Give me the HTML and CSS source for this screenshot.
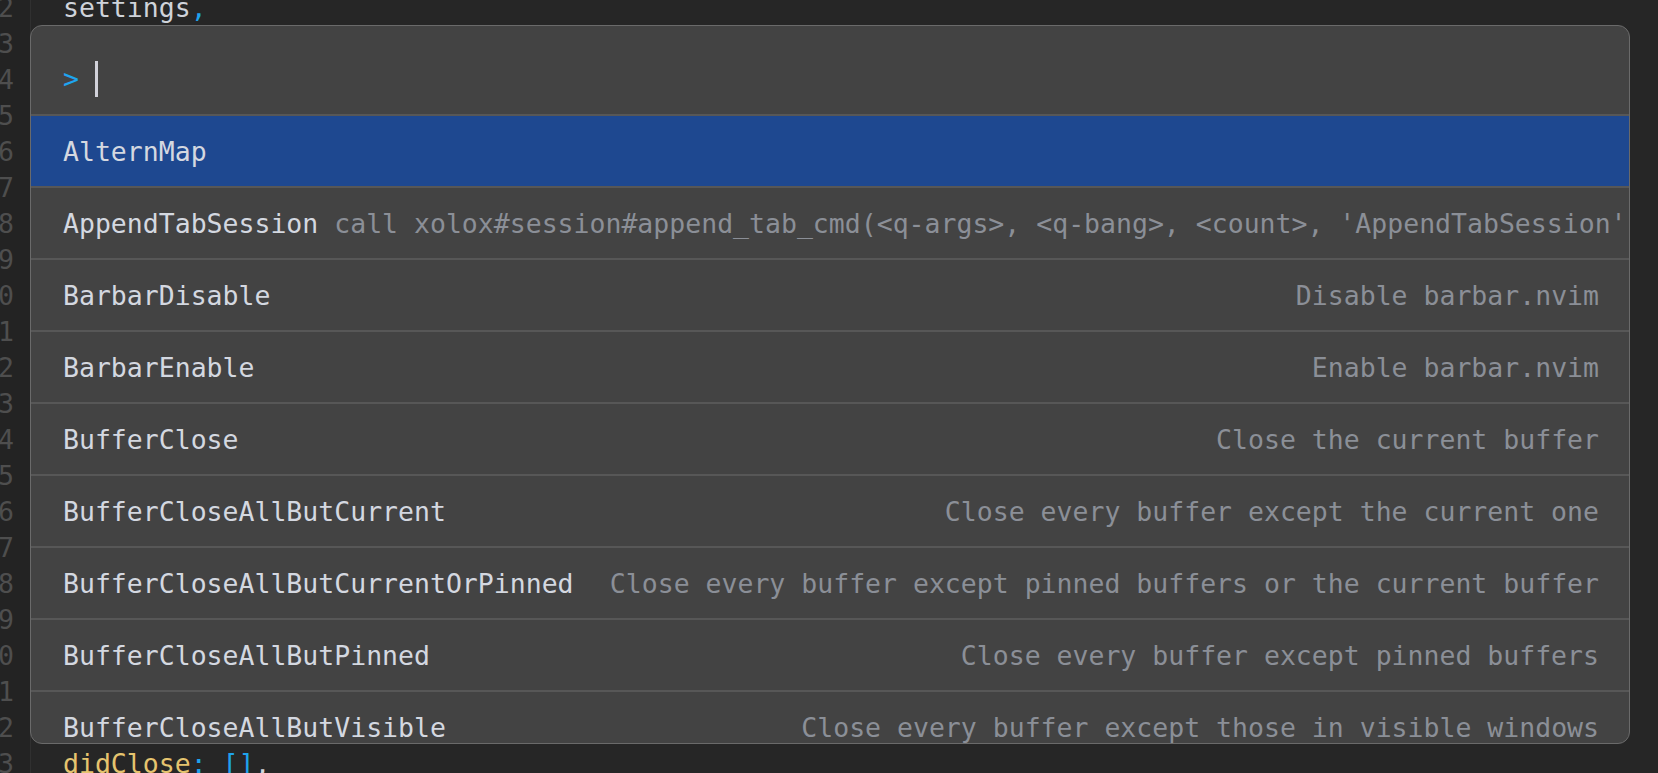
FILE: index.html
```html
<!DOCTYPE html>
<html>
<head>
<meta charset="utf-8">
<link rel="stylesheet" href="styles.css">
</head>
<body>
<div class="editor">
  <div class="gutter">
    <div class="ln">2</div><div class="ln">3</div><div class="ln">4</div><div class="ln">5</div><div class="ln">6</div><div class="ln">7</div><div class="ln">8</div><div class="ln">9</div><div class="ln">0</div><div class="ln">1</div><div class="ln">2</div><div class="ln">3</div><div class="ln">4</div><div class="ln">5</div><div class="ln">6</div><div class="ln">7</div><div class="ln">8</div><div class="ln">9</div><div class="ln">0</div><div class="ln">1</div><div class="ln">2</div><div class="ln">3</div>
  </div>
  <div class="code">
    <div class="line"><span class="txt">settings</span><span class="punc">,</span></div>
    <div class="line"></div><div class="line"></div><div class="line"></div><div class="line"></div><div class="line"></div><div class="line"></div><div class="line"></div><div class="line"></div><div class="line"></div><div class="line"></div><div class="line"></div><div class="line"></div><div class="line"></div><div class="line"></div><div class="line"></div><div class="line"></div><div class="line"></div><div class="line"></div><div class="line"></div><div class="line"></div>
    <div class="line"><span class="key">didClose</span><span class="punc">: []</span><span class="txt">,</span></div>
  </div>
</div>

<div class="palette">
  <div class="prompt"><span class="caret">&gt; </span><span class="cursor"></span></div>
  <div class="list">
    <div class="row selected"><span class="name">AlternMap</span></div>
    <div class="row"><span class="name">AppendTabSession</span><span class="desc">call xolox#session#append_tab_cmd(&lt;q-args&gt;, &lt;q-bang&gt;, &lt;count&gt;, 'AppendTabSession')</span></div>
    <div class="row"><span class="name">BarbarDisable</span><span class="desc">Disable barbar.nvim</span></div>
    <div class="row"><span class="name">BarbarEnable</span><span class="desc">Enable barbar.nvim</span></div>
    <div class="row"><span class="name">BufferClose</span><span class="desc">Close the current buffer</span></div>
    <div class="row"><span class="name">BufferCloseAllButCurrent</span><span class="desc">Close every buffer except the current one</span></div>
    <div class="row"><span class="name">BufferCloseAllButCurrentOrPinned</span><span class="desc">Close every buffer except pinned buffers or the current buffer</span></div>
    <div class="row"><span class="name">BufferCloseAllButPinned</span><span class="desc">Close every buffer except pinned buffers</span></div>
    <div class="row"><span class="name">BufferCloseAllButVisible</span><span class="desc">Close every buffer except those in visible windows</span></div>
  </div>
</div>
</body>
</html>
```
FILE: styles.css
```css
html, body {
  margin: 0;
  padding: 0;
  background: #262626;
  overflow: hidden;
  height: 773px;
}

body {
  font-family: "DejaVu Sans Mono", "Liberation Mono", monospace;
  font-size: 26.5px;
  position: relative;
}

.editor {
  display: flex;
  margin-top: -10px;
}

.gutter {
  width: 30px;
  border-right: 1px solid #303030;
  background: #232323;
  flex-shrink: 0;
}

.ln {
  width: 14px;
  height: 36px;
  line-height: 36px;
  color: #4e4e4e;
  text-indent: -2px;
}

.code {
  padding-left: 32px;
  flex: 1;
}

.line {
  height: 36px;
  line-height: 36px;
  white-space: pre;
}

.txt { color: #cfd3da; }
.punc { color: #1fa2eb; }
.key { color: #e5c46f; }

.palette {
  position: absolute;
  left: 30px;
  top: 25px;
  width: 1598px;
  height: 717px;
  background: #434343;
  border: 1px solid #6a6a6a;
  border-radius: 12px;
  overflow: hidden;
}

.prompt {
  height: 36px;
  line-height: 36px;
  padding: 35px 32px 17px;
  display: flex;
  align-items: center;
  white-space: pre;
  color: #d0d0d8;
}

.caret { color: #1ea5f0; }

.cursor {
  display: inline-block;
  width: 3px;
  height: 36px;
  background: #d2d2da;
}

.row {
  height: 70px;
  border-top: 2px solid #575757;
  padding: 0 30px 0 32px;
  display: flex;
  align-items: center;
  gap: 1ch;
  white-space: pre;
}

.row.selected {
  background: #1e4890;
}

.name {
  color: #d4d8e0;
  flex-shrink: 0;
}

.desc {
  color: #8b8f97;
  margin-left: auto;
  flex-shrink: 0;
}
```
